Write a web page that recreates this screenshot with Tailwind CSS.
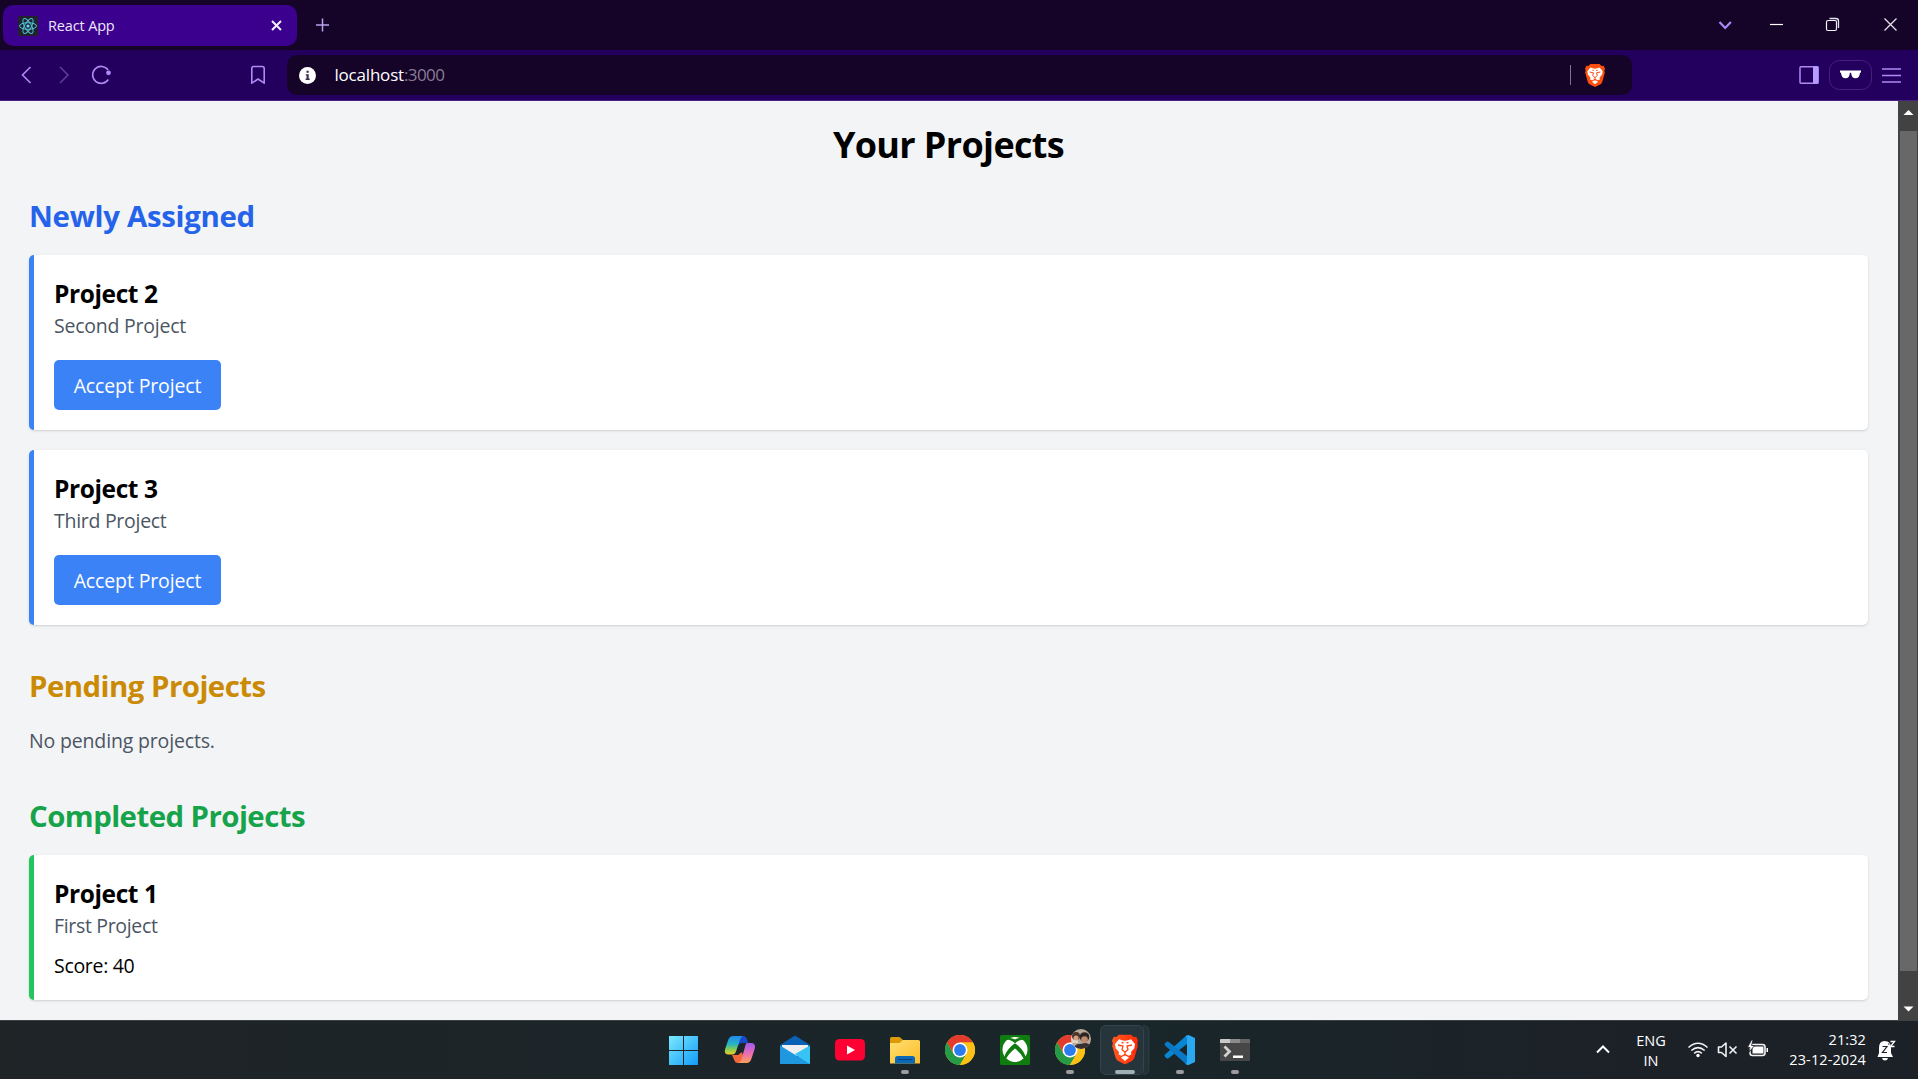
<!DOCTYPE html>
<html lang="en">
<head>
<meta charset="utf-8">
<title>React App</title>
<script src="https://cdn.jsdelivr.net/npm/@tailwindcss/browser@4"></script>
</head>
<body class="flex h-screen flex-col overflow-hidden bg-[#f3f4f6] font-['Open_Sans','Noto_Sans',sans-serif]">
<svg class="absolute h-0 w-0">
  <defs>
    <linearGradient id="brv" x1="0" y1="0" x2="1" y2="0"><stop offset="0" stop-color="#ff5a1f"/><stop offset="1" stop-color="#ff2a08"/></linearGradient>
    <symbol id="lion" viewBox="0 0 26 30">
      <path d="M7 0h12l2.600 2.600 2.600-.3L26 6l-.8 3 .6 2.500-3.300 11.500q-.6 2-2.300 3.300L13 30l-7.200-3.700q-1.700-1.300-2.300-3.300L.2 11.500l.6-2.500L0 6l1.800-3.700 2.600.3z"/>
      <path fill="#fff" d="M13 6.200l3-.5 3-1 4 4.800-.7 4.300-3.300 3.700 .4 2.600-2.800 1.200-3.600-2-3.600 2-2.800-1.200 .4-2.600-3.300-3.700L3 9.500l4-4.800 3 1z"/>
      <path fill="#fff" d="M13 20.800l4 2.200-4 3.500-4-3.500z"/>
      <path fill="none" stroke="#ff4a14" stroke-width="1.300" d="M6 10.500l5 1-1 3.500 3 2.800 3-2.800-1-3.500 5-1M13 17.500v4M9.500 8l2 .4M16.500 8l-2 .4"/>
    </symbol>
    <symbol id="chrome" viewBox="-15 -15 30 30">
      <circle r="15" fill="#fbc116"/>
      <path fill="#e33b2e" d="M-13-7.500A15 15 0 0 1 13-7.500L0-7.500-6.500 3.700z"/>
      <path fill="#269b47" d="M-13-7.500A15 15 0 0 0 0 15L6.500 3.700-6.500 3.700z"/>
      <path fill="#fbc116" d="M13-7.500A15 15 0 0 1 0 15L6.500 3.700 0-7.500z"/>
      <circle r="7.500" fill="#fff"/><circle r="5.900" fill="#2b7cee"/>
    </symbol>
  </defs>
</svg>

<!-- Tab strip -->
<div class="flex h-[50px] shrink-0 items-start bg-[#150428] pl-[3px]">
  <div class="mt-[5px] flex h-[41px] w-[294px] items-center rounded-[10px] bg-[#3b008e] pl-[15px] pr-[15px]">
    <svg class="h-5 w-5" viewBox="0 0 20 20"><rect width="20" height="20" rx="1.500" fill="#202329"/><g fill="none" stroke="#4fc3e0" stroke-width="1"><ellipse cx="10" cy="10" rx="8.500" ry="3.300"/><ellipse cx="10" cy="10" rx="8.500" ry="3.300" transform="rotate(60 10 10)"/><ellipse cx="10" cy="10" rx="8.500" ry="3.300" transform="rotate(120 10 10)"/></g><circle cx="10" cy="10" r="1.600" fill="#61dafb"/></svg>
    <span class="ml-[10px] grow pt-px text-[14.500px] tracking-[-0.150px] text-[#eee6ff]">React App</span>
    <svg class="h-[11px] w-[11px]" viewBox="0 0 11 11"><path d="M1 1l9 9M10 1l-9 9" stroke="#f4efff" stroke-width="2"/></svg>
  </div>
  <svg class="ml-[18px] mt-[18px] h-[14px] w-[14px]" viewBox="0 0 14 14"><path d="M7.500 .5v13M1 7h13" stroke="#b9a3ee" stroke-width="1.500"/></svg>
  <div class="ml-auto flex h-[50px] w-[200px]">
    <svg class="h-[50px] w-[200px]" viewBox="1718 0 200 50" fill="none">
      <path d="M1719.500 22l5.700 6 5.700-6" stroke="#a78bfa" stroke-width="2.200"/>
      <path d="M1770 24.500h13" stroke="#fff" stroke-width="1.200"/>
      <path d="M1829.500 18.500h6.500q2.500 0 2.500 2.500v7" stroke="#e6e1ee" stroke-width="1.300"/><rect x="1826.500" y="20.500" width="10" height="10" rx="1.500" stroke="#f4f1f8" stroke-width="1.200"/>
      <path d="M1884.500 18.500l12 12M1896.500 18.500l-12 12" stroke="#e6e1ee" stroke-width="1.300"/>
    </svg>
  </div>
</div>

<!-- Toolbar -->
<div class="flex h-[51px] shrink-0 items-start border-b border-[#472080] bg-[#23005e]">
  <svg class="h-[50px] w-[287px]" viewBox="0 50 287 50" fill="none" stroke="#ac8cf5" stroke-width="1.600">
    <path d="M30.500 67l-8 8 8 8"/>
    <path d="M60 67l8 8-8 8" stroke="#5d3a9c"/>
    <path d="M108.300 79.500a8.500 8.500 0 1 1-.2-9.500"/><circle cx="108.500" cy="72.800" r="2.400" fill="#ac8cf5" stroke="none"/>
    <path d="M251.800 68.500q0-2 2-2h8.400q2 0 2 2v14.700l-6.200-4.200-6.200 4.200z" stroke-linejoin="round"/>
  </svg>
  <div class="mt-[5px] flex h-10 w-[1345px] items-center rounded-[10px] bg-[#150428] pl-[11.500px]">
    <svg class="h-[17px] w-[17px]" viewBox="0 0 17 17"><circle cx="8.500" cy="8.500" r="8.500" fill="#fff"/><path fill="#3b2a50" d="M7.500 3.800h2.200v2H7.500zM6.800 7.200h2.900v4.300h1v1.500H6.600v-1.500h1V8.600h-.8z"/></svg>
    <div class="ml-[19px] grow text-[17px] leading-5"><span class="tracking-[-0.200px] text-white">localhost</span><span class="tracking-[-0.600px] text-[#887d98]">:3000</span></div>
    <div class="h-5 w-px bg-[#7d7389]"></div>
    <svg class="ml-[14px] mr-[27px] h-[23px] w-5" fill="#fb4f0e"><use href="#lion" width="20" height="23"/></svg>
  </div>
  <svg class="ml-auto h-[50px] w-[130px]" viewBox="1788 50 130 50" fill="none">
    <rect x="1800" y="66.800" width="18" height="16.500" rx="1" stroke="#ac8cf5" stroke-width="1.500"/><path fill="#b79bff" d="M1813 66.500h5.500v17h-5.500z"/>
    <rect x="1829.500" y="60.500" width="42" height="29" rx="10" stroke="#472080"/>
    <path fill="#fff" d="M1840 70.500h21v2l-1 .3q-.5 5.500-4.500 5.500t-4.400-5.500h-1.200q-.4 5.500-4.400 5.500t-4.500-5.500l-1-.3z"/>
    <path d="M1882 69h19M1882 75.500h19M1882 82h19" stroke="#ac8cf5" stroke-width="1.500"/>
  </svg>
</div>

<!-- Page -->
<div class="flex h-[919px] shrink-0">
  <main class="-ml-px grow px-[30px] pt-[20px]">
    <h1 class="mb-[29px] h-[45px] text-center text-[36px] font-bold leading-[47px] tracking-[-0.650px] text-black">Your Projects</h1>
    <section>
      <h2 class="mb-5 h-10 text-[29.400px] font-bold leading-[42px] tracking-[-0.300px] text-[#2563eb]">Newly Assigned</h2>
      <div class="mb-5 rounded-[5px] border-l-[5px] border-[#3b82f6] bg-white p-5 shadow-[0_1px_3px_rgba(0,0,0,.1),0_1px_2px_rgba(0,0,0,.06)]">
        <h3 class="h-[35px] text-[24.500px] font-bold leading-[37px] tracking-[-0.400px] text-black">Project 2</h3>
        <p class="h-[30px] text-[19.500px] leading-8 tracking-[-0.230px] text-[#4b5563]">Second Project</p>
        <button class="mt-5 block h-[50px] w-[167px] rounded-[5px] bg-[#3b82f6] pt-0.5 text-[19.500px] tracking-[-0.130px] text-white">Accept Project</button>
      </div>
      <div class="rounded-[5px] border-l-[5px] border-[#3b82f6] bg-white p-5 shadow-[0_1px_3px_rgba(0,0,0,.1),0_1px_2px_rgba(0,0,0,.06)]">
        <h3 class="h-[35px] text-[24.500px] font-bold leading-[37px] tracking-[-0.400px] text-black">Project 3</h3>
        <p class="h-[30px] text-[19.500px] leading-8 tracking-[-0.280px] text-[#4b5563]">Third Project</p>
        <button class="mt-5 block h-[50px] w-[167px] rounded-[5px] bg-[#3b82f6] pt-0.5 text-[19.500px] tracking-[-0.130px] text-white">Accept Project</button>
      </div>
    </section>
    <section class="mt-10">
      <h2 class="mb-5 h-10 text-[29.400px] font-bold leading-[42px] tracking-[-0.530px] text-[#ca8a04]">Pending Projects</h2>
      <p class="h-[30px] text-[19.500px] leading-8 tracking-[-0.160px] text-[#4b5563]">No pending projects.</p>
    </section>
    <section class="mt-10">
      <h2 class="mb-5 h-10 text-[29.400px] font-bold leading-[42px] tracking-[-0.550px] text-[#16a34a]">Completed Projects</h2>
      <div class="rounded-[5px] border-l-[5px] border-[#22c55e] bg-white p-5 shadow-[0_1px_3px_rgba(0,0,0,.1),0_1px_2px_rgba(0,0,0,.06)]">
        <h3 class="h-[35px] text-[24.500px] font-bold leading-[37px] tracking-[-0.400px] text-black">Project 1</h3>
        <p class="h-[30px] text-[19.500px] leading-8 tracking-[-0.330px] text-[#4b5563]">First Project</p>
        <p class="mt-[10px] h-[30px] text-[19.500px] leading-8 tracking-[-0.300px] text-black">Score: 40</p>
      </div>
    </section>
  </main>
  <div class="flex w-5 shrink-0 flex-col items-center bg-[#424242]">
    <svg class="h-[30px] w-5 shrink-0" viewBox="0 0 20 30"><path fill="#fff" d="M10.500 9l5 5h-10z"/></svg>
    <div class="ml-px h-[840px] w-[17px] shrink-0 bg-[#686868]"></div>
    <svg class="h-[49px] w-5 shrink-0" viewBox="0 0 20 49"><path fill="#fff" d="M5.500 35.500h10l-5 5z"/></svg>
  </div>
</div>

<!-- Taskbar -->
<div class="flex h-[59px] shrink-0 border-t border-[#3c4143] bg-linear-to-r from-[#1f2427] from-0% via-[#19262a] via-60% to-[#1c2128] to-85% pl-[657px]">
  <svg class="h-[58px] w-[55px]" viewBox="657 1021 55 58"><defs><linearGradient id="win" x1="0" y1="0" x2="1" y2="1"><stop offset="0" stop-color="#7beaff"/><stop offset="1" stop-color="#119bf8"/></linearGradient></defs><path fill="url(#win)" d="M669 1036h14v14h-14zM684 1036h14v14h-14zM669 1051h14v14h-14zM684 1051h14v14h-14z"/></svg>
  <svg class="h-[58px] w-[55px]" viewBox="712 1021 55 58">
    <defs><linearGradient id="ca" x1="0" y1="0" x2="0" y2="1"><stop offset="0" stop-color="#1f8cf0"/><stop offset=".45" stop-color="#28b5c0"/><stop offset=".75" stop-color="#8fcf4a"/><stop offset="1" stop-color="#f2c92a"/></linearGradient><linearGradient id="cb" x1="0" y1="0" x2="0" y2="1"><stop offset="0" stop-color="#a05cf0"/><stop offset=".5" stop-color="#e86ab8"/><stop offset="1" stop-color="#ffa057"/></linearGradient></defs>
    <path fill="#1a49d0" d="M738 1036h5q3 0 4 3.500l1 3.500h-6q-3 0-4 3z"/>
    <path fill="#f2683c" d="M732 1055h6l4-3 1 4-2 5q-1 2-3 2-3 0-4-3.500z"/>
    <path fill="url(#ca)" d="M733 1036h10q-2 .5-3 3.500l-4 12q-1 3-3.500 3h-4q-4.500 0-3.500-5l3-9q1.500-4.500 5-4.500z"/>
    <path fill="url(#cb)" d="M747 1043h4q5 0 3.800 5.500l-3.300 10q-1.500 4.500-5 4.500h-9q3-.5 4-4l3.500-12q.8-4 2-4z"/>
  </svg>
  <svg class="h-[58px] w-[55px]" viewBox="767 1021 55 58"><path fill="#0b62b5" d="M780 1045l15-9.500 15 9.500v6h-30z"/><path fill="#f0f0f0" d="M782 1045h26v4l-13 8-13-8z"/><path fill="#38c3f5" d="M810 1045.500v18.500h-4l-11-10z"/><path fill="#2098e0" d="M780 1045.500l30 18.500h-30z"/></svg>
  <svg class="h-[58px] w-[55px]" viewBox="822 1021 55 58"><rect x="835" y="1039" width="30" height="21.500" rx="4.500" fill="#ff0033"/><path fill="#fff" d="M847 1045.500l8 4.500-8 4.500z"/></svg>
  <svg class="h-[58px] w-[55px]" viewBox="877 1021 55 58"><defs><linearGradient id="fo" x1="0" y1="0" x2="1" y2="1"><stop offset="0" stop-color="#ffdf73"/><stop offset="1" stop-color="#fcbd26"/></linearGradient></defs><path fill="#dc9a09" d="M890 1038.500q0-1.500 1.500-1.500h8l3.500 3v6h-13z"/><path fill="url(#fo)" d="M890 1043h9.500l3.500-3h15.500q1.500 0 1.500 1.500v22h-30z"/><path fill="#0b68b6" d="M895 1063.500v-5q0-2.500 2.500-2.500h15q2.500 0 2.500 2.500v5z"/><path stroke="#0a4379" d="M898 1059.500h14"/><rect x="901" y="1070" width="8" height="4" rx="2" fill="#9a9c9d"/></svg>
  <svg class="h-[58px] w-[55px]" viewBox="932 1021 55 58"><use href="#chrome" x="945" y="1035" width="30" height="30"/></svg>
  <svg class="h-[58px] w-[55px]" viewBox="987 1021 55 58"><rect x="1000" y="1035" width="30" height="30" rx="1.500" fill="#107c10"/><circle cx="1015" cy="1049.500" r="12.500" fill="#fff"/><path fill="#107c10" d="M1006 1040q4-1.500 9 3.200 5-4.700 9-3.200l-1-1.500q-4-1.500-8 1-4-2.500-8-1zM1012 1045.500q-7 6.500-8 13l1.500 1.500q3-6.500 9.500-11.500 6.500 5 9.500 11.500l1.500-1.500q-1-6.500-8-13l-3-2.300z"/></svg>
  <svg class="h-[58px] w-[55px]" viewBox="1042 1021 55 58"><use href="#chrome" x="1055" y="1035" width="30" height="30"/><clipPath id="av"><circle cx="1081" cy="1039" r="10"/></clipPath><g clip-path="url(#av)"><path fill="#b7a99a" d="M1070 1028h22v22h-22z"/><path fill="#ded3c4" d="M1070 1034h8v9h-8z"/><circle cx="1076" cy="1036" r="4" fill="#4a352c"/><circle cx="1076" cy="1038" r="2.500" fill="#d4a183"/><circle cx="1084.500" cy="1037" r="4.800" fill="#2b2422"/><circle cx="1084.500" cy="1039.500" r="3.300" fill="#c08a6e"/><path fill="#3a3032" d="M1073 1050q2-7 7-6l5-1q6 0 7 7z"/></g><rect x="1066" y="1070" width="8" height="4" rx="2" fill="#9a9c9d"/></svg>
  <svg class="h-[58px] w-[55px]" viewBox="1097 1021 55 58"><path d="M1143 1025.500q6 0 6 6v37q0 6-6 6" fill="#233238" stroke="#2e3d43"/><rect x="1100.500" y="1025.500" width="43" height="49" rx="5" fill="#26343b" stroke="#36434a"/><use href="#lion" x="1112" y="1034.500" width="26" height="30" fill="url(#brv)"/><rect x="1115" y="1070" width="20" height="4" rx="2" fill="#9fb0b4"/></svg>
  <svg class="h-[58px] w-[55px]" viewBox="1152 1021 55 58"><path fill="#0a85d1" d="M1187 1035v9l-18.500 14.200q-1 .8-2 0l-1.500-1.500q-1-1.200 0-2.200z"/><path fill="#0a78c4" d="M1187 1065v-9l-18.500-14.200q-1-.8-2 0l-1.500 1.500q-1 1.200 0 2.200z"/><path fill="#29a9f2" d="M1188.500 1035l6.500 3v24l-6.500 3q-2 0-3-1.500 1.500.3 1.500-2v-23q0-2.300-1.500-2 1-1.500 3-1.500z"/><rect x="1176" y="1070" width="8" height="4" rx="2" fill="#9a9c9d"/></svg>
  <svg class="h-[58px] w-[55px]" viewBox="1207 1021 55 58"><rect x="1220" y="1039" width="30" height="22" rx="1" fill="#474747"/><path fill="#c9c9c9" d="M1220 1040q0-1 1-1h9v4h-10z"/><path fill="#8c8c8c" d="M1230 1039h10v4h-10z"/><path fill="#666" d="M1240 1039h9q1 0 1 1v3h-10z"/><path fill="none" stroke="#d2d2d2" stroke-width="2.800" d="M1224.500 1046.500l5 5-5 5"/><path fill="#fff" d="M1233 1055.500h10v2.500h-10z"/><rect x="1231" y="1070" width="8" height="4" rx="2" fill="#9a9c9d"/></svg>

  <div class="ml-auto flex h-[58px] text-[14.500px] leading-5 text-white">
    <svg class="mt-[23px] h-[10px] w-4" viewBox="0 0 16 10"><path d="M2 8.500l6-6 6 6" fill="none" stroke="#fff" stroke-width="2"/></svg>
    <div class="ml-[25px] mt-[10px] w-[30px] text-center">ENG<br>IN</div>
    <svg class="ml-[21px] h-[58px] w-[84px]" viewBox="1686 1021 84 58" fill="none" stroke="#f2f2f2" stroke-width="1.600">
      <path d="M1687.500 1047.500q9.500-8.500 19 0M1690.300 1050.500q6.700-5.700 13.400 0M1693.200 1053.300q3.800-3.300 7.600 0"/><circle cx="1697" cy="1055.500" r="1.700" fill="#fff" stroke="none"/>
      <path d="M1717.500 1047h3l4.500-4v13.500l-4.500-4h-3z" stroke-linejoin="round"/><path d="M1728.500 1046.500l7 7M1735.500 1046.500l-7 7"/>
      <rect x="1749" y="1044.500" width="15" height="11" rx="2.500"/><path d="M1751.500 1046.500h11v7h-11zM1765.500 1048h1.500v4h-1.500z" fill="#fff" stroke="none"/><path fill="#fff" stroke="#1c2128" stroke-width=".8" d="M1750.500 1040l-4 7.500h2.500l-1 5 5.500-7h-3l1.500-5.500z"/>
    </svg>
    <div class="ml-[10px] mt-[9px] w-[85px] text-right tracking-[0.100px]">21:32<br>23-12-2024</div>
    <svg class="ml-[11px] mr-[21px] h-[58px] w-5" viewBox="1876 1021 20 58"><path fill="#fff" d="M1883.500 1041q6.500 0 6.500 7v5l2 4h-15.500l1.500-4v-5q0-7 5.500-7zM1881 1058h6q-.5 2.500-3 2.500t-3-2.500z"/><path fill="none" stroke="#fff" stroke-width="1.300" d="M1889.500 1041.500h4l-4 5h4"/><path fill="none" stroke="#1c2128" stroke-width="1.200" d="M1881.500 1046.500h4.500l-4.500 6h4.500M1887 1044h1.500"/></svg>
  </div>
</div>
</body>
</html>
